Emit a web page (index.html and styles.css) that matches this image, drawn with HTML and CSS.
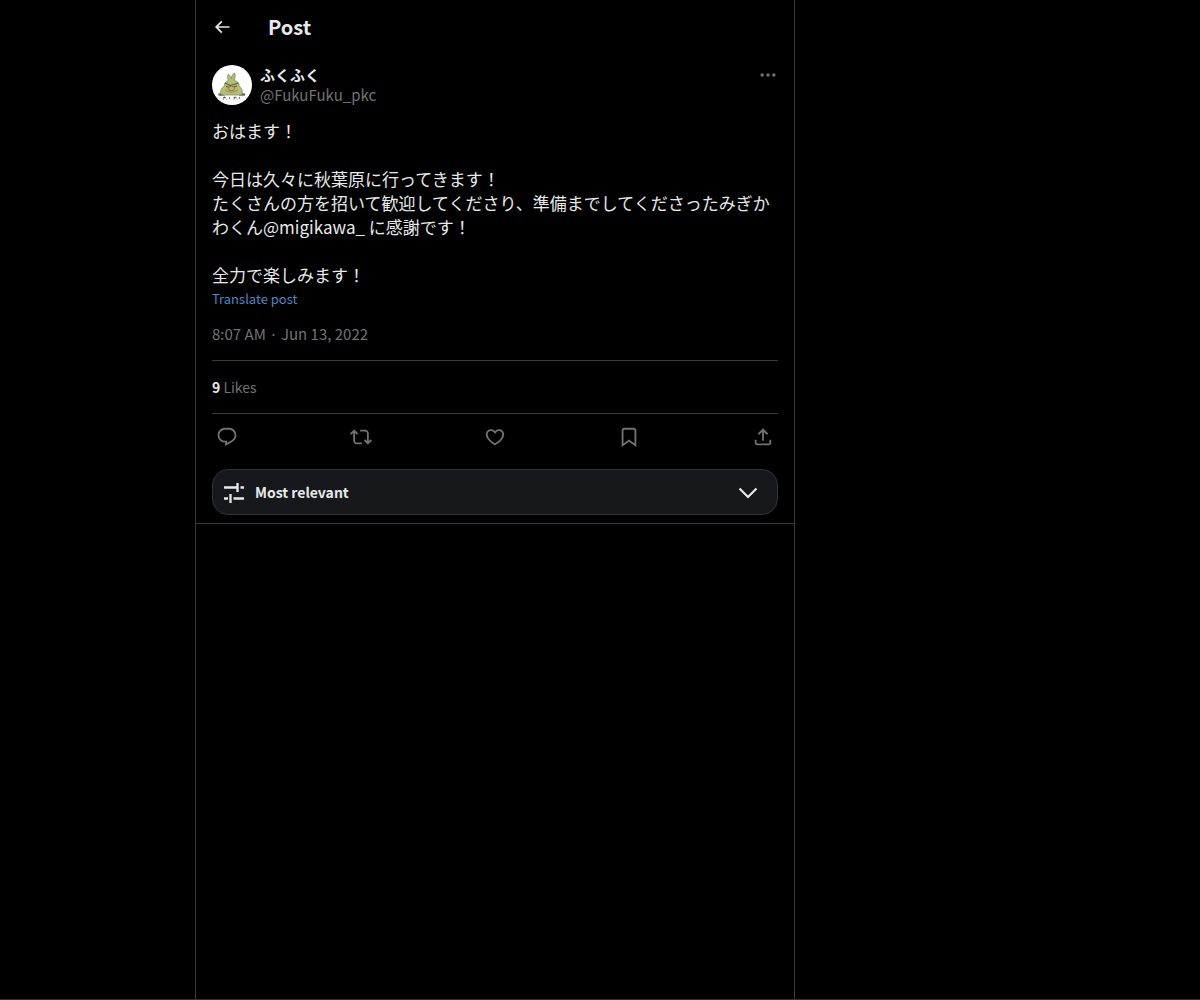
FILE: index.html
```html
<!DOCTYPE html>
<html lang="ja">
<head>
<meta charset="utf-8">
<meta name="viewport" content="width=device-width, initial-scale=1">
<title>Post</title>
<link rel="stylesheet" href="styles.css">
</head>
<body>
<main class="column">
  <header class="topbar">
    <button class="icon-button back" type="button" aria-label="Back">
      <svg viewBox="0 0 24 24" width="20" height="20"><path d="M7.414 13l5.043 5.04-1.414 1.42L3.586 12l7.457-7.46 1.414 1.42L7.414 11H21v2H7.414z"/></svg>
    </button>
    <h1 class="title">Post</h1>
  </header>
  <article class="post">
    <div class="author">
      <svg class="avatar" viewBox="0 0 40 40" width="40" height="40" role="img" aria-label="ふくふく">
        <circle cx="20" cy="20" r="20" fill="#fff"/>
        <path d="M7.500 29.500h4M28 29.500h4" stroke="#66665f" stroke-width="2.600" stroke-linecap="round"/>
        <path d="M16.500 15.500C15 12 15.500 9.500 16.500 9.500c1.600.6 2.500 2.500 2.800 4.500C19.500 11 21 8.500 22.500 8c1.300 2.500.5 5-.3 7.500 3 .5 5 2.500 5 5.500 2.800 2.500 3.800 5.500 2.800 8-1.500 1.500-4 1-6 1h-9c-2 0-4.500.5-6-1-1-2.500 0-5.500 3.300-8 .2-3 1.700-5 4.200-5.500z" fill="#b3bd7a" stroke="#878f58" stroke-width=".8"/>
        <path d="M12.800 18l5.700 2.500L26.500 18M14 21.500l3 .5M22 22l3-1" fill="none" stroke="#565b38" stroke-width="1.100"/>
        <ellipse cx="19.500" cy="23.500" rx="3.200" ry="2.200" fill="#d6ab5e" stroke="#806a40" stroke-width=".8"/>
        <path d="M13.500 24.500c2 3.500 10 3.500 12.500 0" fill="none" stroke="#858d55" stroke-width=".8"/>
        <path d="M11 32.500h3m-1.500-1l-1 3m2.500-1l.8 1M18 32l-1 1 1 1.200M21.500 32.500h3m-1.500-1l-1 3m2.300-1l.9 1M28 32l-1 1 1 1.200" fill="none" stroke="#555" stroke-width=".8"/>
      </svg>
      <div class="names">
        <a class="name" href="#">ふくふく</a>
        <a class="handle" href="#">@FukuFuku_pkc</a>
      </div>
      <button class="icon-button more" type="button" aria-label="More">
        <svg viewBox="0 0 24 24" width="20" height="20"><path d="M3 12c0-1.100.9-2 2-2s2 .9 2 2-.9 2-2 2-2-.9-2-2zm9 2c1.100 0 2-.9 2-2s-.9-2-2-2-2 .9-2 2 .9 2 2 2zm7 0c1.100 0 2-.9 2-2s-.9-2-2-2-2 .9-2 2 .9 2 2 2z"/></svg>
      </button>
    </div>
    <p class="text">おはます！

今日は久々に秋葉原に行ってきます！
たくさんの方を招いて歓迎してくださり、準備までしてくださったみぎかわくん@migikawa_ に感謝です！

全力で楽しみます！</p>
    <button class="translate" type="button">Translate post</button>
    <a class="date" href="#"><time datetime="2022-06-13T08:07">8:07 AM · Jun 13, 2022</time></a>
    <div class="stats"><a class="likes" href="#"><strong>9</strong> Likes</a></div>
    <div class="actions">
      <button class="icon-button" type="button" aria-label="Reply"><svg viewBox="0 0 24 24" width="22" height="22"><path d="M1.751 10c0-4.420 3.584-8 8.005-8h4.366c4.490 0 8.129 3.640 8.129 8.130 0 2.960-1.607 5.680-4.196 7.110l-8.054 4.460v-3.690h-.067c-4.490.1-8.183-3.510-8.183-8.010zm8.005-6c-3.317 0-6.005 2.690-6.005 6 0 3.370 2.770 6.080 6.138 6.010l.351-.01h1.761v2.300l5.087-2.810c1.951-1.080 3.163-3.130 3.163-5.360 0-3.390-2.744-6.130-6.129-6.130H9.756z"/></svg></button>
      <button class="icon-button" type="button" aria-label="Repost"><svg viewBox="0 0 24 24" width="22" height="22"><path d="M4.500 3.880l4.432 4.140-1.364 1.460L5.500 7.550V16c0 1.100.896 2 2 2H13v2H7.500c-2.209 0-4-1.790-4-4V7.550L1.432 9.480.068 8.020 4.500 3.880zM16.500 6H11V4h5.500c2.209 0 4 1.790 4 4v8.450l2.068-1.930 1.364 1.460-4.432 4.140-4.432-4.140 1.364-1.460 2.068 1.930V8c0-1.100-.896-2-2-2z"/></svg></button>
      <button class="icon-button" type="button" aria-label="Like"><svg viewBox="0 0 24 24" width="22" height="22"><path d="M16.697 5.500c-1.222-.06-2.679.51-3.890 2.160l-.805 1.090-.806-1.090C9.984 6.010 8.526 5.440 7.304 5.500c-1.243.07-2.349.78-2.910 1.910-.552 1.120-.633 2.780.479 4.820 1.074 1.970 3.257 4.270 7.129 6.610 3.870-2.340 6.052-4.640 7.126-6.610 1.111-2.040 1.030-3.700.477-4.820-.561-1.130-1.666-1.840-2.908-1.910zm4.187 7.690c-1.351 2.480-4.001 5.120-8.379 7.670l-.503.3-.504-.3c-4.379-2.550-7.029-5.190-8.382-7.670-1.360-2.500-1.410-4.860-.514-6.670.887-1.790 2.647-2.910 4.601-3.010 1.651-.09 3.368.56 4.798 2.010 1.429-1.450 3.146-2.100 4.796-2.010 1.954.1 3.714 1.220 4.601 3.010.896 1.810.846 4.170-.514 6.670z"/></svg></button>
      <button class="icon-button" type="button" aria-label="Bookmark"><svg viewBox="0 0 24 24" width="22" height="22"><path d="M4 4.500C4 3.120 5.119 2 6.500 2h11C18.881 2 20 3.120 20 4.500v18.440l-8-5.710-8 5.710V4.500zM6.500 4c-.276 0-.5.22-.5.5v14.560l6-4.290 6 4.290V4.500c0-.28-.224-.5-.5-.5h-11z"/></svg></button>
      <button class="icon-button" type="button" aria-label="Share"><svg viewBox="0 0 24 24" width="22" height="22"><path d="M12 2.590l5.700 5.700-1.410 1.420L13 6.410V16h-2V6.410l-3.300 3.300-1.410-1.420L12 2.590zM21 15l-.02 3.510c0 1.380-1.120 2.490-2.500 2.490H5.500C4.110 21 3 19.880 3 18.500V15h2v3.500c0 .28.22.5.5.5h12.980c.28 0 .5-.22.5-.5L19 15h2z"/></svg></button>
    </div>
    <button class="sort" type="button">
      <svg viewBox="0 0 22 22" width="22" height="22"><path d="M1 6.500h12.500M14.500 2v9M17.500 6.500H21M1 17.500h4M7.500 13v9M10.500 17.500H21" fill="none" stroke="currentColor" stroke-width="2.300"/></svg>
      <span class="sort-label">Most relevant</span>
      <svg viewBox="0 0 20 20" width="20" height="20"><path d="M1.500 6.500l8.500 8.500L18.500 6.500" fill="none" stroke="currentColor" stroke-width="2.200"/></svg>
    </button>
  </article>
</main>
</body>
</html>
```
FILE: styles.css
```css
* {
  box-sizing: border-box;
}

body {
  display: grid;
  /* Free space is split so the column sits left of centre. */
  grid-template-columns: 13fr minmax(0, 600px) 27fr;
  min-height: 100vh;
  margin: 0;
  border-bottom: 1px solid #383033;
  background: #000;
  color: #e7e9ea;
  font: 15px/20px "Noto Sans CJK JP", "Noto Sans", sans-serif;
}

a {
  color: inherit;
  text-decoration: none;
}

button {
  padding: 0;
  border: 0;
  background: none;
  color: inherit;
  font: inherit;
  cursor: pointer;
}

svg {
  display: block;
  fill: currentColor;
}

.column {
  grid-column: 2;
  border: solid #38393a;
  border-width: 0 1px;
}

.topbar {
  display: flex;
  align-items: center;
  gap: 36px;
  height: 54px;
  padding: 0 16px;
}

.title {
  margin: 0;
  font-size: 20px;
  line-height: 24px;
}

.post {
  display: flex;
  flex-direction: column;
  padding: 11px 16px 8px;
  border-bottom: 1px solid #38393a;
}

.author {
  display: flex;
  gap: 8px;
  margin-bottom: 14px;
}

.names {
  display: flex;
  flex: 1;
  flex-direction: column;
}

.name {
  font-weight: 700;
}

.handle,
.date,
.likes,
.icon-button {
  color: #717273;
}

.icon-button {
  display: grid;
  place-items: center;
}

.back {
  color: #e7e9ea;
}

.more {
  width: 20px;
  height: 20px;
}

.text {
  margin: 0;
  font-size: 17px;
  line-height: 24px;
  white-space: pre-wrap;
}

.translate {
  align-self: flex-start;
  color: #4689c8;
  font-size: 13px;
  line-height: 24px;
}

.date {
  align-self: flex-start;
  margin: 13px 0 16px;
}

.stats {
  padding: 16px 0;
  border: solid #38393a;
  border-width: 1px 0;
}

.likes {
  font-size: 14px;
}

.likes strong {
  color: #e7e9ea;
}

.actions {
  display: flex;
  justify-content: space-between;
  height: 46px;
}

.actions .icon-button {
  width: 30px;
}

.sort {
  display: flex;
  align-items: center;
  gap: 10px;
  height: 46px;
  margin-top: 9px;
  padding: 0 19px 0 10px;
  border: 1px solid #2f3336;
  border-radius: 16px;
  background: #16181c;
  font-size: 14px;
  font-weight: 700;
}

.sort-label {
  flex: 1;
  text-align: left;
}
```
